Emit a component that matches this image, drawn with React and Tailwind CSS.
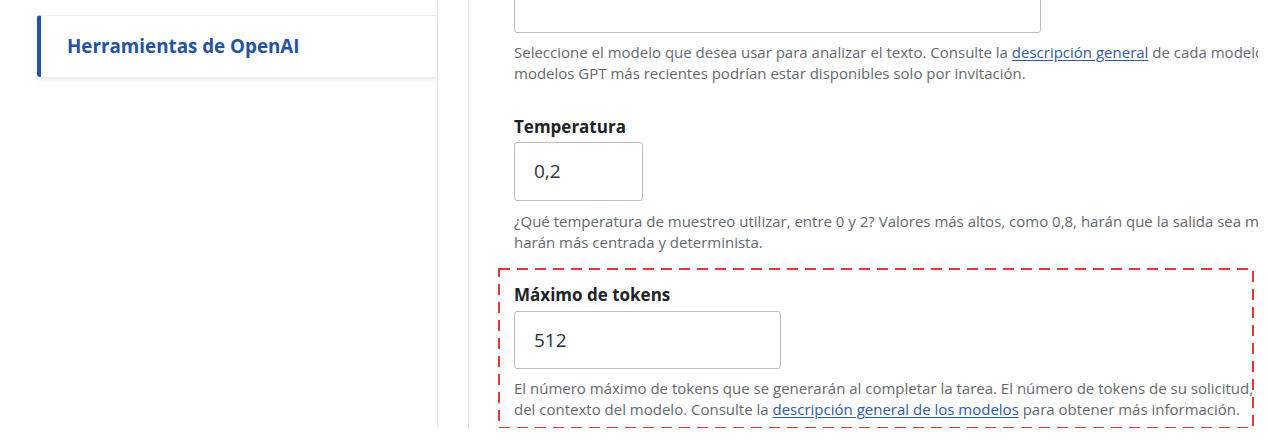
import React from "react";

const Link = ({ children }) => (
  <a href="#" className="text-[#2f5aa8] underline underline-offset-2">
    {children}
  </a>
);

const Desc = ({ className, children }) => (
  <div className={`text-[15px] leading-[21px] text-[#646970] ${className}`}>{children}</div>
);

export default function App() {
  return (
    <div
      className="flex h-[444px] w-[1268px] overflow-hidden bg-white"
      style={{ fontFamily: '"Open Sans", "Noto Sans", sans-serif' }}
    >
      {/* sidebar */}
      <div className="ml-[37px] h-[428px] w-[401px] border-r border-[#e6e6e6] pt-[15px]">
        <div className="flex h-[62px] items-center rounded-l-[3px] border-t border-l-4 border-[#f0f0f0] border-l-[#2452a4] bg-white pl-[26px] shadow-[0_3px_4px_rgba(0,0,0,0.08)]">
          <span className="text-[18.8px] font-bold text-[#2452a4]">Herramientas de OpenAI</span>
        </div>
      </div>

      {/* settings panel */}
      <div className="ml-[30px] h-[428px] w-[790px] overflow-hidden border-l border-[#e3e3e3]">
        {/* model select (scrolled) */}
        <div className="ml-[45px]">
          <div className="-mt-[20px] h-[53px] w-[527px] rounded-[3px] border border-[#b9bcc0]"></div>
          <Desc className="mt-[9px]">
            <p className="whitespace-nowrap">
              Seleccione el modelo que desea usar para analizar el texto. Consulte la{" "}
              <Link>descripción general</Link> de cada modelo. Los
            </p>
            <p className="whitespace-nowrap">
              modelos GPT más recientes podrían estar disponibles solo por invitación.
            </p>
          </Desc>
        </div>

        {/* temperature */}
        <div className="ml-[45px] mt-[32px]">
          <label className="block text-[17px] font-bold leading-[22px] text-[#1d2327]">Temperatura</label>
          <div className="mt-[4px] flex h-[59px] w-[129px] items-center rounded-[3px] border border-[#b9bcc0] pl-[19px] text-[19px] text-[#2c3338]">
            0,2
          </div>
          <Desc className="mt-[10px]">
            <p className="whitespace-nowrap">
              ¿Qué temperatura de muestreo utilizar, entre 0 y 2? Valores más altos, como 0,8, harán que la salida sea
              más aleatoria, mientras que valores más bajos como 0,2 la
            </p>
            <p className="whitespace-nowrap">harán más centrada y determinista.</p>
          </Desc>
        </div>

        {/* max tokens (highlighted) */}
        <div className="relative ml-[29px] mt-[15px] h-[161px] w-[756px] pl-[16px] pt-[16px]">
          <svg className="pointer-events-none absolute left-0 top-0" width="756" height="161">
            <rect
              x="1"
              y="1"
              width="754"
              height="159"
              fill="none"
              stroke="#e53935"
              strokeWidth="2"
              strokeDasharray="11 7"
            />
          </svg>
          <label className="block text-[17px] font-bold leading-[22px] text-[#1d2327]">Máximo de tokens</label>
          <div className="mt-[5px] flex h-[58px] w-[267px] items-center rounded-[3px] border border-[#b9bcc0] pl-[19px] text-[19px] text-[#2c3338]">
            512
          </div>
          <Desc className="mt-[9px]">
            <p className="whitespace-nowrap">
              El número máximo de tokens que se generarán al completar la tarea. El número de tokens de su solicitud, más
              max_tokens, no puede exceder la longitud
            </p>
            <p className="whitespace-nowrap">
              del contexto del modelo. Consulte la <Link>descripción general de los modelos</Link> para obtener más
              información.
            </p>
          </Desc>
        </div>
      </div>
    </div>
  );
}
